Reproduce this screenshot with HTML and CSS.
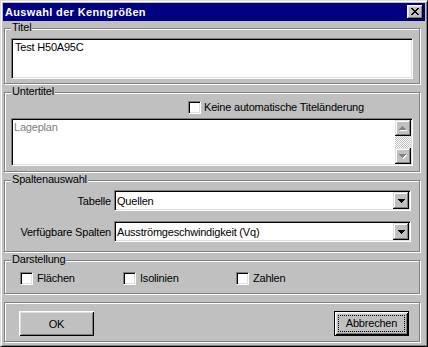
FILE: index.html
```html
<!DOCTYPE html>
<html lang="de">
<head>
    <meta charset="UTF-8">
    <title>Auswahl der Kenngrößen</title>
    <link rel="stylesheet" href="styles.css">
</head>
<body>

    <div class="window">
        <div class="titlebar">
            <span class="title">Auswahl der Kenngrößen</span>
            <span class="close-btn">
                <svg width="8" height="7" viewBox="0 0 8 7" shape-rendering="crispEdges">
                    <path d="M0 0h2v1h-2z M6 0h2v1h-2z M1 1h2v1h-2z M5 1h2v1h-2z M2 2h4v1h-4z M3 3h2v1h-2z M2 4h4v1h-4z M1 5h2v1h-2z M5 5h2v1h-2z M0 6h2v1h-2z M6 6h2v1h-2z" fill="#000"/>
                </svg>
            </span>
        </div>

        <div class="client">
            <div class="group group-title">
                <span class="legend">Titel</span>
                <div class="field field-title">Test H50A95C</div>
            </div>

            <div class="group group-subtitle">
                <span class="legend">Untertitel</span>
                <label class="check check-auto"><span class="box"></span>Keine automatische Titeländerung</label>
                <div class="field field-subtitle">
                    <span class="muted">Lageplan</span>
                    <div class="vscroll">
                        <span class="sbtn">
                            <svg width="8" height="5" viewBox="0 0 8 5" shape-rendering="crispEdges">
                                <path d="M4 1h1v1h-1z M3 2h3v1h-3z M2 3h5v1h-5z M1 4h7v1h-7z" fill="#fff"/>
                                <path d="M3 0h1v1h-1z M2 1h3v1h-3z M1 2h5v1h-5z M0 3h7v1h-7z" fill="#808080"/>
                            </svg>
                        </span>
                        <span class="track"></span>
                        <span class="sbtn">
                            <svg width="8" height="5" viewBox="0 0 8 5" shape-rendering="crispEdges">
                                <path d="M1 1h7v1h-7z M2 2h5v1h-5z M3 3h3v1h-3z M4 4h1v1h-1z" fill="#fff"/>
                                <path d="M0 0h7v1h-7z M1 1h5v1h-5z M2 2h3v1h-3z M3 3h1v1h-1z" fill="#808080"/>
                            </svg>
                        </span>
                    </div>
                </div>
            </div>

            <div class="group group-columns">
                <span class="legend">Spaltenauswahl</span>
                <div class="row">
                    <span class="row-label">Tabelle</span>
                    <div class="combo">
                        <span class="combo-text">Quellen</span>
                        <span class="drop-btn">
                            <svg width="7" height="4" viewBox="0 0 7 4" shape-rendering="crispEdges">
                                <path d="M0 0h7v1h-7z M1 1h5v1h-5z M2 2h3v1h-3z M3 3h1v1h-1z" fill="#000"/>
                            </svg>
                        </span>
                    </div>
                </div>
                <div class="row">
                    <span class="row-label">Verfügbare Spalten</span>
                    <div class="combo">
                        <span class="combo-text">Ausströmgeschwindigkeit (Vq)</span>
                        <span class="drop-btn">
                            <svg width="7" height="4" viewBox="0 0 7 4" shape-rendering="crispEdges">
                                <path d="M0 0h7v1h-7z M1 1h5v1h-5z M2 2h3v1h-3z M3 3h1v1h-1z" fill="#000"/>
                            </svg>
                        </span>
                    </div>
                </div>
            </div>

            <div class="group group-display">
                <span class="legend">Darstellung</span>
                <label class="check check-areas"><span class="box"></span>Flächen</label>
                <label class="check check-lines"><span class="box"></span>Isolinien</label>
                <label class="check"><span class="box"></span>Zahlen</label>
            </div>

            <div class="group group-buttons">
                <span class="push-btn">OK</span>
                <span class="push-btn push-default"><span class="focus">Abbrechen</span></span>
            </div>
        </div>
    </div>

</body>
</html>
```

FILE: styles.css
```css
* {
    box-sizing: border-box;
}

body {
    margin: 0;
    font-family: "Liberation Sans", Arial, sans-serif;
    font-size: 11px;
    letter-spacing: -0.2px;
    color: #000;
    background: #c0c0c0;
}

.window {
    width: 428px;
    height: 347px;
    padding: 2px;
    background: #c0c0c0;
    border: 1px solid;
    border-color: #dfdfdf #000 #000 #dfdfdf;
    box-shadow: inset 1px 1px #fff, inset -1px -1px #808080;
}

/* title bar */
.titlebar {
    height: 18px;
    display: flex;
    align-items: center;
    padding-left: 2px;
    background: #000080;
    color: #fff;
}

.title {
    font-weight: bold;
    letter-spacing: 0.35px;
}

.close-btn {
    margin-left: auto;
    margin-right: 2px;
    width: 16px;
    height: 14px;
    display: flex;
    align-items: center;
    justify-content: center;
    padding: 0 1px 1px 0;
    background: #c0c0c0;
    box-shadow: inset -1px -1px #000, inset 1px 1px #fff, inset -2px -2px #808080, inset 2px 2px #dfdfdf;
}

.close-btn svg {
    display: block;
}

/* client area */
.client {
    display: flex;
    flex-direction: column;
    gap: 8px;
    padding: 7px 0 0 1px;
}

.group {
    position: relative;
    width: 416px;
    border: 1px solid #808080;
    box-shadow: inset 1px 1px #fff, 1px 1px #fff;
}

.legend {
    position: absolute;
    top: -8px;
    left: 6px;
    padding: 0 1px;
    line-height: 13px;
    background: #c0c0c0;
}

.field {
    background: #fff;
    border: 1px solid;
    border-color: #808080 #fff #fff #808080;
    box-shadow: inset 1px 1px #000, inset -1px -1px #dfdfdf;
}

/* Titel */
.group-title {
    height: 56px;
    padding-top: 9px;
}

.field-title {
    height: 41px;
    margin: 0 6px;
    padding: 2px 3px;
    line-height: 13px;
}

/* Untertitel */
.group-subtitle {
    height: 80px;
    padding-top: 8px;
}

.check {
    display: flex;
    align-items: center;
    gap: 4px;
    line-height: 13px;
}

.box {
    width: 13px;
    height: 13px;
    background: #fff;
    border: 1px solid;
    border-color: #808080 #fff #fff #808080;
    box-shadow: inset 1px 1px #000, inset -1px -1px #dfdfdf;
}

.check-auto {
    margin-left: 183px;
    gap: 3px;
}

.field-subtitle {
    height: 48px;
    margin: 4px 6px 0;
    padding: 1px;
    display: flex;
}

.muted {
    flex: 1;
    padding: 1px 1px;
    line-height: 13px;
    color: #808080;
}

.vscroll {
    width: 16px;
    display: flex;
    flex-direction: column;
}

.sbtn {
    height: 16px;
    display: flex;
    align-items: center;
    justify-content: center;
    background: #c0c0c0;
    box-shadow: inset -1px -1px #000, inset 1px 1px #dfdfdf, inset -2px -2px #808080, inset 2px 2px #fff;
}

.track {
    flex: 1;
    background: repeating-conic-gradient(#c0c0c0 0 25%, #fff 0 50%) 0 0 / 2px 2px;
}

/* Spaltenauswahl */
.group-columns {
    height: 72px;
    padding-top: 9px;
    display: flex;
    flex-direction: column;
    gap: 10px;
}

.row {
    height: 21px;
    display: flex;
    align-items: center;
}

.row-label {
    width: 106px;
    margin-right: 3px;
    text-align: right;
}

.combo {
    flex: 1;
    height: 21px;
    margin-right: 8px;
    padding: 1px;
    display: flex;
    align-items: center;
    background: #fff;
    border: 1px solid;
    border-color: #808080 #fff #fff #808080;
    box-shadow: inset 1px 1px #000, inset -1px -1px #dfdfdf;
}

.combo-text {
    flex: 1;
    padding-left: 1px;
}

.drop-btn {
    width: 16px;
    height: 17px;
    display: flex;
    align-items: center;
    justify-content: center;
    background: #c0c0c0;
    box-shadow: inset -1px -1px #000, inset 1px 1px #dfdfdf, inset -2px -2px #808080, inset 2px 2px #fff;
}

/* Darstellung */
.group-display {
    height: 34px;
    padding: 11px 0 0 15px;
    display: flex;
    align-items: flex-start;
}

.check-areas {
    width: 103px;
}

.check-lines {
    width: 113px;
}

/* buttons */
.group-buttons {
    height: 40px;
    padding: 8px 10px 0 14px;
    display: flex;
    justify-content: space-between;
    align-items: flex-start;
}

.push-btn {
    width: 75px;
    height: 25px;
    display: flex;
    align-items: center;
    justify-content: center;
    box-shadow: inset 1px 1px #fff, inset -1px -1px #000, inset 2px 2px #dfdfdf, inset -2px -2px #808080;
}

.push-default {
    border: 1px solid #000;
}

.focus {
    padding: 1px 4px 2px;
    border: 1px dotted #000;
    width: 67px;
    text-align: center;
}
```
